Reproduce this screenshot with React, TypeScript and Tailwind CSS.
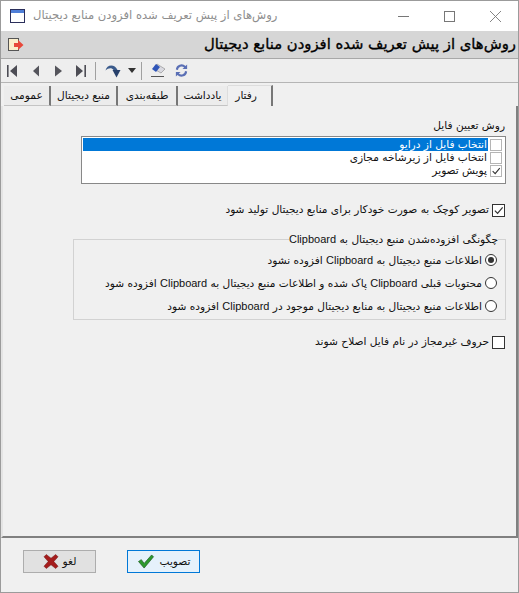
const font = "font-['DejaVu_Sans',sans-serif]";

const tabs = [
  { label: "رفتار", width: "w-[45px]", pad: "pr-[14px] justify-start border-r-2 border-r-[#777777]", active: true },
  { label: "یادداشت", width: "w-[50px]", pad: "justify-center border-r border-r-[#dddddd]" },
  { label: "طبقه‌بندی", width: "w-[60px]", pad: "justify-center border-r-2 border-r-[#777777]" },
  { label: "منبع دیجیتال", width: "w-[67px]", pad: "justify-center border-r-2 border-r-[#777777]" },
  { label: "عمومی", width: "w-[47px]", pad: "justify-center border-r-2 border-r-[#777777]" },
];

const listItems = [
  { label: "انتخاب فایل از درایو", checked: false, selected: true },
  { label: "انتخاب فایل از زیرشاخه مجازی", checked: false },
  { label: "پویش تصویر", checked: true },
];

const radios = [
  { label: "اطلاعات منبع دیجیتال به Clipboard افزوده نشود", checked: true },
  { label: "محتویات قبلی Clipboard پاک شده و اطلاعات منبع دیجیتال به Clipboard افزوده شود" },
  { label: "اطلاعات منبع دیجیتال به منابع دیجیتال موجود در Clipboard افزوده شود" },
];

// the latin word is set narrower than the DejaVu fallback would give
function Mixed({ text }: { text: string }) {
  const parts = text.split("Clipboard");
  return (
    <span>
      {parts.map((part, i) => (
        <span key={i}>
          {part}
          {i < parts.length - 1 && <span className="font-['Liberation_Sans',sans-serif] text-[11px]">Clipboard</span>}
        </span>
      ))}
    </span>
  );
}

function CheckBox({ checked, className }: { checked?: boolean; className: string }) {
  return (
    <span className={`${className} shrink-0 border bg-white flex items-center justify-center`}>
      {checked && (
        <svg viewBox="0 0 12 12" className="w-full h-full">
          <path d="M2 6.2 L5 9.2 L10.5 2.5" fill="none" stroke="#333333" strokeWidth="1.3" />
        </svg>
      )}
    </span>
  );
}

function Radio({ checked }: { checked?: boolean }) {
  return (
    <span className="w-[12px] h-[12px] shrink-0 rounded-full border border-[#333333] bg-white flex items-center justify-center">
      {checked && <span className="w-[6px] h-[6px] rounded-full bg-[#333333]" />}
    </span>
  );
}

function TitleIcon() {
  return (
    <svg viewBox="0 0 15 14" className="w-[15px] h-[14px]">
      <rect x="0.5" y="0.5" width="14" height="13" fill="#fff" stroke="#2b2f5b" />
      <rect x="1" y="1" width="13" height="3" fill="#4f7fd8" />
    </svg>
  );
}

function NavIcon({ kind }: { kind: "first" | "prev" | "next" | "last" }) {
  if (kind === "first")
    return (
      <svg viewBox="0 0 10 12" className="w-[10px] h-[12px]">
        <path d="M0 0h1.6v12H0z M10 0v12L3 6z" fill="#4d4d55" />
      </svg>
    );
  if (kind === "prev")
    return (
      <svg viewBox="0 0 6 12" className="w-[6px] h-[12px] ml-[16px]">
        <path d="M6 0.5v11L0 6z" fill="#55555c" />
      </svg>
    );
  if (kind === "next")
    return (
      <svg viewBox="0 0 7 12" className="w-[7px] h-[12px] ml-[16px]">
        <path d="M0 0.5v11L7 6z" fill="#55555c" />
      </svg>
    );
  return (
    <svg viewBox="0 0 10 12" className="w-[10px] h-[12px] ml-[14px]">
      <path d="M8.4 0H10v12H8.4z M0 0v12L7 6z" fill="#4d4d55" />
    </svg>
  );
}

export default function App() {
  return (
    <div className={`${font} w-[519px] h-[593px] bg-[#f0f0f0] border border-[#9b9b9b] flex flex-col overflow-hidden text-[10.6px] text-[#111111]`}>
      {/* title bar */}
      <div className="h-[30px] bg-white flex items-center shrink-0 pl-[9px]">
        <TitleIcon />
        <div dir="rtl" className="ml-[8px] text-[11.6px] text-[#8e8e8e] whitespace-nowrap">
          روش‌های از پیش تعریف شده افزودن منابع دیجیتال
        </div>
        <div className="ml-auto flex items-center pr-[17px]">
          <span className="w-[11px] h-px bg-[#777777]" />
          <span className="w-[11px] h-[11px] border border-[#777777] ml-[35px]" />
          <svg viewBox="0 0 11 11" className="w-[11px] h-[11px] ml-[35px]">
            <path d="M0 0L11 11M11 0L0 11" stroke="#777777" strokeWidth="0.9" />
          </svg>
        </div>
      </div>

      {/* heading */}
      <div className="h-[28px] bg-[#d6d6d6] border-b border-[#a8a8a8] shrink-0 flex items-center justify-between pl-[7px] pr-[2px]">
        <svg viewBox="0 0 16 14" className="w-[16px] h-[14px]">
          <rect x="0.5" y="0.5" width="10" height="12" fill="#fbeecb" stroke="#555555" />
          <path d="M6 5h4V2l5.5 5L10 12V9H6z" fill="#e8483a" />
        </svg>
        <div dir="rtl" className="text-[14.8px] text-black whitespace-nowrap [-webkit-text-stroke:0.35px_black]">
          روش‌های از پیش تعریف شده افزودن منابع دیجیتال
        </div>
      </div>

      {/* toolbar */}
      <div className="h-[24px] bg-[#eeeeee] border-b border-[#b5b5b5] shrink-0 flex items-center pl-[6px]">
        <NavIcon kind="first" />
        <NavIcon kind="prev" />
        <NavIcon kind="next" />
        <NavIcon kind="last" />
        <span className="w-px h-[18px] bg-[#a0a0a0] ml-[9px]" />
        <svg viewBox="0 0 16 14" className="w-[16px] h-[14px] ml-[9px]">
          <path d="M0.5 6.5C1.5 0.5 9.5 -0.8 12.5 6L8.5 6C7 3.5 3.5 3.5 0.5 6.5z" fill="#3b5b8c" />
          <path d="M7.5 6h8L11.5 13.5z" fill="#27406b" />
        </svg>
        <svg viewBox="0 0 8 5" className="w-[8px] h-[5px] ml-[7px]">
          <path d="M0 0h8L4 5z" fill="#333333" />
        </svg>
        <span className="w-px h-[18px] bg-[#a0a0a0] ml-[5px]" />
        <svg viewBox="0 0 16 15" className="w-[16px] h-[15px] ml-[8px]">
          <path d="M7 1l8 5-4 4-7-4z" fill="#d9d9e0" stroke="#777777" strokeWidth="0.5" />
          <path d="M6 1L2 6l4 3 4-5z" fill="#2f55b8" />
          <path d="M1 13.5h13" stroke="#555555" strokeWidth="1" />
        </svg>
        <svg viewBox="0 0 16 16" className="w-[15px] h-[15px] ml-[8px]">
          <path d="M2 7A6 6 0 0 1 12.3 3.2L14 1.5v5H9L10.8 4.8A4 4 0 0 0 4.2 7.5z" fill="#5a6fb5" />
          <path d="M14 9A6 6 0 0 1 3.7 12.8L2 14.5v-5H7L5.2 11.2A4 4 0 0 0 11.8 8.5z" fill="#5a6fb5" />
        </svg>
      </div>

      {/* tabs */}
      <div dir="rtl" className="h-[23px] shrink-0 flex items-end pr-[245px] bg-[#f0f0f0]">
        {tabs.map((tab) => (
          <div
            key={tab.label}
            className={`${tab.width} ${tab.pad} flex items-center whitespace-nowrap ${
              tab.active ? "h-[21px] bg-[#f0f0f0] border-t border-t-[#dddddd]" : "h-[20px] bg-[#ececec] border-b border-b-[#c4c4c4]"
            }`}
          >
            {tab.label}
          </div>
        ))}
      </div>

      {/* behaviour page */}
      <div dir="rtl" className="h-[432px] shrink-0 border-b-2 border-b-[#808080] border-l-2 border-l-[#e4e4e4] border-r-2 border-r-[#808080] pr-[10px] pl-[70px] pt-[12px] flex flex-col">
        <div className="pr-[1px] leading-[14px]">روش تعیین فایل</div>
        <div className="mt-[4px] ml-[8px] h-[48px] border border-[#888888] bg-white p-[1px]">
          {listItems.map((item) => (
            <div key={item.label} className="h-[13px] flex items-center gap-[2px] pr-[2px] leading-[13px]">
              <CheckBox checked={item.checked} className="w-[12px] h-[12px] border-[#b5b5b5]" />
              <span className={`flex-1 h-full pr-[1px] ${item.selected ? "bg-[#0078d7] text-white" : ""}`}>{item.label}</span>
            </div>
          ))}
        </div>

        <div className="mt-[19px] flex items-center gap-[3px] pr-[1px] h-[14px]">
          <CheckBox checked className="w-[13px] h-[13px] border-[#333333]" />
          <span>تصویر کوچک به صورت خودکار برای منابع دیجیتال تولید شود</span>
        </div>

        <div className="relative mt-[22px] h-[81px] border border-[#d2d2d2]">
          <div className="absolute -top-[8px] right-[7px] bg-[#f0f0f0] leading-[14px] whitespace-nowrap">
            <Mixed text="چگونگی افزوده‌شدن منبع دیجیتال به Clipboard" />
          </div>
          <div className="pt-[13px] pr-[8px] flex flex-col gap-[9px]">
            {radios.map((radio) => (
              <div key={radio.label} className="h-[14px] flex items-center gap-[3px] whitespace-nowrap">
                <Radio checked={radio.checked} />
                <Mixed text={radio.label} />
              </div>
            ))}
          </div>
        </div>

        <div className="mt-[15px] flex items-center gap-[3px] pr-[1px] h-[14px]">
          <CheckBox className="w-[13px] h-[13px] border-[#333333]" />
          <span>حروف غیرمجاز در نام فایل اصلاح شوند</span>
        </div>
      </div>

      {/* footer */}
      <div className="flex-1 flex items-start gap-[31px] pl-[22px] pt-[12px]">
        <button className="w-[73px] h-[23px] bg-[#e1e1e1] border border-[#adadad] flex items-center justify-center gap-[4px]">
          <svg viewBox="0 0 16 16" className="w-[16px] h-[15px]">
            <path d="M3 0.5l5 4 5-4 2.5 2.5-4.5 5 4.5 5-2.5 2.5-5-4-5 4-2.5-2.5 4.5-5-4.5-5z" fill="#a51d1d" stroke="#6e1010" strokeWidth="0.5" />
          </svg>
          <span dir="rtl">لغو</span>
        </button>
        <button className="w-[73px] h-[23px] bg-[#e5f1fb] border border-[#0078d7] flex items-center justify-center gap-[5px]">
          <svg viewBox="0 0 18 16" className="w-[18px] h-[15px]">
            <path d="M1 8l3-2 3 4 8-9 2 2-10 12z" fill="#2d9a2d" stroke="#14531a" strokeWidth="0.7" />
          </svg>
          <span dir="rtl">تصویب</span>
        </button>
      </div>
    </div>
  );
}
